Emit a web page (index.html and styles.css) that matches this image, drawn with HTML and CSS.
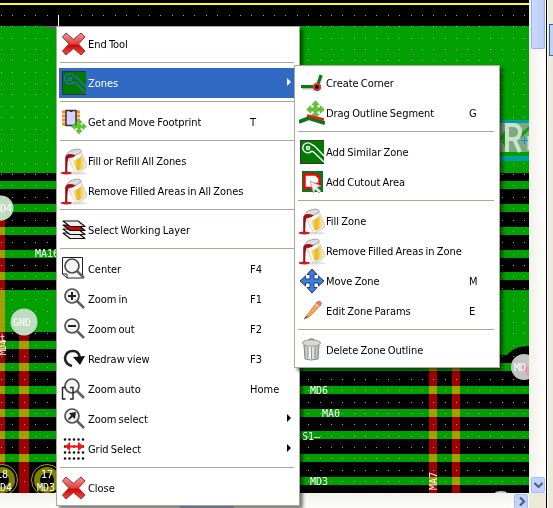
FILE: index.html
```
<!DOCTYPE html>
<html lang="en">
<head>
<meta charset="utf-8">
<title>Board editor</title>
<link rel="stylesheet" href="styles.css">
</head>
<body>
<svg class="board" width="529" height="493" viewBox="0 0 529 493">
  <rect width="529" height="493" fill="#000"/>
  <g fill="#00a000" shape-rendering="crispEdges">
    <rect y="26" width="529" height="147"/>
    <rect y="181" width="529" height="8"/><rect y="204" width="529" height="8"/><rect y="227" width="529" height="8"/>
    <rect y="250" width="529" height="8"/><rect y="272" width="529" height="8"/><rect y="290" width="529" height="42"/>
    <rect x="300" y="330" width="229" height="25"/>
    <rect y="341" width="290" height="8"/><rect y="363" width="529" height="8"/><rect y="386" width="529" height="8"/>
    <rect y="409" width="529" height="8"/><rect y="431" width="529" height="8"/><rect y="454" width="529" height="8"/>
    <rect x="290" y="477" width="239" height="8"/>
  </g>
  <path d="M499 363V355H507Q514 346 529 346V363Z" fill="#000"/>
  <rect y="3" width="529" height="2" fill="#ff0"/>
  <g class="tracks" fill="#a00000" shape-rendering="crispEdges">
    <rect y="208" width="5" height="285"/><rect x="19" y="326" width="10" height="167"/>
    <rect x="429" y="360" width="8" height="133"/><rect x="452" y="360" width="8" height="133"/>
  </g>
  <g fill="#00a0a0" shape-rendering="crispEdges"><rect x="490" y="120" width="39" height="41"/></g>
  <rect x="490" y="123" width="39" height="33" fill="#00a000"/>
  <rect x="490" y="123" width="39" height="29" fill="#80a880"/>
  <path d="M500 138l6-9v20zM519 135l10-9v4l-8 8z" fill="#10a010"/>
  <g id="dots" fill="#a0a0a0" shape-rendering="crispEdges"></g>
  <path d="M507 152V125H514Q520 126 520 132T514 139H508M514 139L520 152" fill="none" stroke="#c8e4c8" stroke-width="4"/>
  <path d="M529 136V150" stroke="#c8e4c8" stroke-width="3"/>
  <path d="M521 140.500H528M524.500 137V144" stroke="#0090ff"/>
  <circle cx="1" cy="208" r="12.500" fill="#c0dcc0"/>
  <circle cx="24" cy="322" r="13.500" fill="#c0dcc0"/>
  <circle cx="524" cy="367" r="13" fill="#c4c4c4"/><path d="M521 366L529 378V366Z" fill="#e0a0a0"/>
  <ellipse cx="501" cy="493" rx="6" ry="2" fill="#c4c4c4"/>
  <g fill="#000" stroke="#a0a000"><circle cx="2" cy="480" r="15.500"/><circle cx="47" cy="480" r="15.500"/></g>
  <g fill="#000" stroke="#808000" stroke-width="6"><circle cx="2" cy="480" r="10"/><circle cx="47" cy="480" r="10"/></g>
  <g class="net">
    <text x="0" y="212">D4</text><text x="13" y="326">GND</text>
    <text x="35" y="257">MA16</text><text x="310" y="394">MD6</text><text x="322" y="417">MA0</text>
    <text x="302" y="440">S1–</text><text x="310" y="485">MD3</text><text x="514" y="371">MD</text>
    <text x="-4" y="478">18</text><text x="0" y="491">D4</text><text x="41" y="478">17</text><text x="37" y="491">MD3</text>
    <text class="small" transform="translate(6 355) rotate(-90)">MD4</text><text transform="translate(437 490) rotate(-90)">MA7</text>
    <text class="small" x="0" y="341">t</text>
  </g>
  <path d="M58.500 15V26" stroke="#fff"/><path d="M46 26.500H57" stroke="#f0f"/>
</svg>

<div class="vscroll"><div class="thumb"></div><div class="btn"><svg width="13" height="14"><path d="M2.500 5L6.500 9L10.500 5" /></svg></div></div>
<div class="hscroll"><div class="bar"></div><div class="btn"><svg width="13" height="13"><path d="M5 2.500L9 6.500L5 10.500"/></svg></div></div>
<div class="side"><i></i></div>

<svg class="defs" width="0" height="0">
  <linearGradient id="red" x2="0" y2="1"><stop stop-color="#ee9a9a"/><stop offset=".5" stop-color="#df4040"/><stop offset=".55" stop-color="#cc0808"/><stop offset="1" stop-color="#f04b42"/></linearGradient>
  <linearGradient id="metal"><stop stop-color="#aaa"/><stop offset=".4" stop-color="#fff"/><stop offset="1" stop-color="#aaa"/></linearGradient>
  <linearGradient id="can"><stop stop-color="#ddd"/><stop offset=".4" stop-color="#fff"/><stop offset="1" stop-color="#ddd"/></linearGradient>
  <linearGradient id="gold"><stop stop-color="#fff0b0"/><stop offset=".45" stop-color="#e8b420"/><stop offset="1" stop-color="#fff4b8"/></linearGradient>
  <symbol id="i-x" viewBox="0 0 26 26"><path d="M5 2L12.500 8.500L20 2L24 6L17.500 13L24 20L20 24L12.500 17.500L5 24L1.500 20L8 13L1.500 6Z" fill="url(#red)" stroke="#a82a28" stroke-linejoin="round"/></symbol>
  <symbol id="i-zone" viewBox="0 0 26 26"><rect x="1" y="1" width="24" height="24" fill="#333"/><rect x="2" y="2" width="23" height="22" fill="#007a00"/><g fill="none" stroke="currentColor" stroke-width="1.400"><path d="M12.500 5.500Q15 6.500 16.500 8L25 17M12 12.500H14L25 23"/><path d="M12.700 12A5 5 0 1 1 12.500 5.500"/></g><circle cx="9" cy="9" r="2.300" fill="currentColor"/><circle cx="9" cy="9" r=".8" fill="#007a00"/></symbol>
  <symbol id="i-arrows" viewBox="0 0 26 26"><path d="M13 1L18 6.500H15V11H19.500V8L25 13L19.500 18V15H15V19.500H18L13 25L8 19.500H11V15H6.500V18L1 13L6.500 8V11H11V6.500H8Z" stroke-linejoin="round"/></symbol>
  <symbol id="i-foot" viewBox="0 0 26 26"><path d="M1 3H6M1 7H6M1 11H6M1 15H6M15 3H19M15 7H19M15 11H19" stroke="#f09030" stroke-width="3"/><rect x="5" y="1.500" width="10" height="15" fill="#d4d4ff" stroke="#333" stroke-width="1.500"/><path d="M8 1.500Q10 5 12.500 1.500Z" fill="#333"/><svg x="10" y="9" width="16" height="17" fill="#62c832" stroke="#48a820"><use href="#i-arrows"/></svg></symbol>
  <symbol id="i-fill" viewBox="0 0 26 26"><ellipse cx="14" cy="24.300" rx="12" ry="1.300" fill="#ddd"/><path d="M7 6L20 3L26 17Q22 23 15 24Q10 16 7 6Z" fill="url(#can)" stroke="#bbb" stroke-width=".6"/><path d="M12 12Q18 11 21 7L24.500 17Q21 21 16 22Z" fill="url(#gold)"/><ellipse cx="13.500" cy="4.500" rx="7" ry="2.800" transform="rotate(-17 13.500 4.500)" fill="#ddd" stroke="#999" stroke-width=".8"/><path d="M5 9Q6 5 12 6L15 7Q13 10 8.500 9.500Q7 11 7 23H5Z" fill="#9c1018"/><ellipse cx="6" cy="24" rx="5.500" ry="1.400" fill="#cc1828"/></symbol>
  <symbol id="i-layers" viewBox="0 0 26 26"><g fill="#eee" stroke="#111" stroke-width="1.200" stroke-linejoin="round"><path d="M2 16H17L24 21.500H9Z"/><path d="M2 12H17L24 17.500H9Z"/><path d="M2 8H17L24 13.500H9Z" fill="#d80000"/><path d="M2 4H17L24 9.500H9Z"/></g></symbol>
  <symbol id="i-mag" viewBox="0 0 26 26"><circle cx="11" cy="10" r="7" fill="#f4f4f4" stroke="#505050" stroke-width="1.700"/><path d="M16 15L23 22" stroke="#606060" stroke-width="2.500"/></symbol>
  <symbol id="i-center" viewBox="0 0 26 26"><path d="M1.500 1.500H21.500V22H6L1.500 18ZM1.500 18H6V22" fill="#fff" stroke="#222"/><use href="#i-mag"/></symbol>
  <symbol id="i-in" viewBox="0 0 26 26"><use href="#i-mag"/><path d="M7 10H15M11 6V14" stroke="#222" stroke-width="2"/></symbol>
  <symbol id="i-out" viewBox="0 0 26 26"><use href="#i-mag"/><path d="M7 10H15" stroke="#222" stroke-width="2"/></symbol>
  <symbol id="i-redraw" viewBox="0 0 26 26"><path d="M11 20Q4 18 4 12Q5 5 12 5Q18 5 19 12" fill="none" stroke="#222" stroke-width="2.600"/><path d="M12 11L24 10L19 19Z" fill="#111"/></symbol>
  <symbol id="i-auto" viewBox="0 0 26 26"><use href="#i-mag"/><path d="M4.500 11.500H1.500V23H4.500M9 11.500H12V23H9" fill="none" stroke="#222" stroke-width="1.400"/></symbol>
  <symbol id="i-select" viewBox="0 0 26 26"><use href="#i-mag"/><path d="M8 7L15 6L14 13L11.500 11L8 14L7 13L10 9.500Z" fill="#222"/></symbol>
  <symbol id="i-grid" viewBox="0 0 26 26"><path d="M4 3.500H24M4 10.500H24M4 16.500H24M4 22.500H24" stroke="#111" stroke-width="2.600" stroke-linecap="round" stroke-dasharray="0 4.500"/><path d="M4 10.500L9 6V9.500H17V6L23 10.500L17 15V11.500H9V15Z" fill="#ff1010"/></symbol>
  <symbol id="i-corner" viewBox="0 0 26 26"><path d="M3 18H18L23 6" fill="none" stroke="#bbb" stroke-width="3"/><path d="M2 16.500H18L22 5" fill="none" stroke="#008010" stroke-width="3"/><circle cx="18" cy="17" r="3.200" fill="#111" stroke="#d83838" stroke-width="2.200"/></symbol>
  <symbol id="i-drag" viewBox="0 0 26 26"><svg x="7" y="0" width="19" height="19" fill="#68c838" stroke="#50a828"><use href="#i-arrows"/></svg><path d="M0 22L10 18L26 23" fill="none" stroke="#087818" stroke-width="4"/><path d="M8 15.500L25 19.500" stroke="#f01818" stroke-width="2.500"/></symbol>
  <symbol id="i-cut" viewBox="0 0 26 26"><rect x="3" y="2" width="21" height="21" fill="#007a20"/><path d="M5.500 5.500H17L20.500 9V15H14V19H5.500Z" fill="#fff" stroke="#f00" stroke-width="2.500"/><path d="M11 12L22 17L18 18.500L22 22L20 24L16.500 20.500L14.500 24Z" fill="#eee" stroke="#999" stroke-width=".8"/></symbol>
  <symbol id="i-move" viewBox="0 0 26 26"><g fill="#3d7de0" stroke="#223c70"><use href="#i-arrows"/></g></symbol>
  <symbol id="i-pen" viewBox="0 0 26 26"><path d="M6 20L18 4L22 7L10 19L5 21Z" fill="#f8a850" stroke="#c87828" stroke-width=".8"/><path d="M17 5L19 3Q22 2 23 6L21 8Z" fill="#e87070"/><path d="M16 6L20 9" stroke="#ccc" stroke-width="1.500"/><path d="M5 21L7 18L9 19Z" fill="#555"/></symbol>
  <symbol id="i-trash" viewBox="0 0 26 26"><path d="M5 8H20L19 22Q12 24 6 22Z" fill="url(#metal)" stroke="#888"/><path d="M9 10V21M12.500 10V22M16 10V21" stroke="#999" stroke-width="1.200"/><ellipse cx="12.500" cy="6" rx="9" ry="3.200" fill="#d8d8d4" stroke="#999"/><path d="M10 3Q12.500 1 15 3" fill="none" stroke="#888" stroke-width="1.500"/></symbol>
</svg>

<nav class="menu main">
  <div class="item"><svg><use href="#i-x"/></svg><span>End Tool</span></div>
  <hr>
  <div class="item active"><svg><use href="#i-zone"/></svg><span>Zones</span><b class="arrow"></b></div>
  <hr>
  <div class="item"><svg><use href="#i-foot"/></svg><span>Get and Move Footprint</span><kbd>T</kbd></div>
  <hr>
  <div class="item"><svg class="wide"><use href="#i-fill"/></svg><span>Fill or Refill All Zones</span></div>
  <div class="item"><svg class="wide"><use href="#i-fill"/></svg><span>Remove Filled Areas in All Zones</span></div>
  <hr>
  <div class="item"><svg><use href="#i-layers"/></svg><span>Select Working Layer</span></div>
  <hr>
  <div class="item"><svg><use href="#i-center"/></svg><span>Center</span><kbd>F4</kbd></div>
  <div class="item"><svg><use href="#i-in"/></svg><span>Zoom in</span><kbd>F1</kbd></div>
  <div class="item"><svg><use href="#i-out"/></svg><span>Zoom out</span><kbd>F2</kbd></div>
  <div class="item"><svg><use href="#i-redraw"/></svg><span>Redraw view</span><kbd>F3</kbd></div>
  <div class="item"><svg><use href="#i-auto"/></svg><span>Zoom auto</span><kbd>Home</kbd></div>
  <div class="item"><svg><use href="#i-select"/></svg><span>Zoom select</span><b class="arrow"></b></div>
  <div class="item"><svg><use href="#i-grid"/></svg><span>Grid Select</span><b class="arrow"></b></div>
  <hr>
  <div class="item"><svg><use href="#i-x"/></svg><span>Close</span></div>
</nav>

<nav class="menu sub">
  <div class="item"><svg><use href="#i-corner"/></svg><span>Create Corner</span></div>
  <div class="item"><svg><use href="#i-drag"/></svg><span>Drag Outline Segment</span><kbd>G</kbd></div>
  <hr>
  <div class="item"><svg><use href="#i-zone"/></svg><span>Add Similar Zone</span></div>
  <div class="item"><svg><use href="#i-cut"/></svg><span>Add Cutout Area</span></div>
  <hr>
  <div class="item"><svg class="wide"><use href="#i-fill"/></svg><span>Fill Zone</span></div>
  <div class="item"><svg class="wide"><use href="#i-fill"/></svg><span>Remove Filled Areas in Zone</span></div>
  <div class="item"><svg><use href="#i-move"/></svg><span>Move Zone</span><kbd>M</kbd></div>
  <div class="item"><svg><use href="#i-pen"/></svg><span>Edit Zone Params</span><kbd>E</kbd></div>
  <hr>
  <div class="item"><svg><use href="#i-trash"/></svg><span>Delete Zone Outline</span></div>
</nav>
<script src="grid.js"></script>
</body>
</html>
```
FILE: styles.css
```
body { margin: 0; width: 553px; height: 508px; overflow: hidden; position: relative; background: #ece9d8; font: 11px/30px "DejaVu Sans Condensed", "DejaVu Sans", sans-serif; font-stretch: condensed; color: #000; display: grid; grid-template: 493px 15px / 529px 17px 7px; }
.board { display: block; }
.tracks { mix-blend-mode: screen; }
.net { fill: #fff; font: 10px "DejaVu Sans Mono", monospace; }
.small { font-size: 8.5px; }
.defs { position: absolute; }
.vscroll { display: flex; flex-direction: column; justify-content: space-between; background: linear-gradient(90deg, #f3f1ec, #fefefb); padding: 0 1px 0 2px; }
.vscroll .thumb { height: 49px; background: linear-gradient(90deg, #cad9fc, #b9cbf8); border: 1px solid #98b0e8; border-top: 0; border-radius: 0 0 2px 2px; box-sizing: border-box; }
.btn { width: 14px; height: 16px; background: #c3d3fd; border: 1px solid #a9bdf0; border-radius: 2px; box-sizing: border-box; display: flex; overflow: hidden; }
.btn path { fill: none; stroke: #4d6185; stroke-width: 2.2; }
.hscroll { grid-row: 2; grid-column: 1; display: flex; justify-content: space-between; background: linear-gradient(#f3f1ec, #fefefb); padding: 1px 1px 0 180px; }
.bar { width: 54px; background: #b9cbf8; }
.side { grid-column: 3; grid-row: 1 / 3; border-left: 1px solid #000; background: #ece9d8; box-shadow: inset 1px 0 #fff; padding: 24px 0 0 2px; }
.side i { display: block; height: 30px; border: 1px solid #316ac5; border-right: 0; background: #c1d2ee; }
.menu { position: absolute; box-sizing: border-box; background: #fff; border: 1px solid #aca899; padding: 2px; box-shadow: 3px 3px 3px rgba(0, 0, 0, .5); }
.main { left: 56px; top: 26px; width: 244px; height: 480px; padding-right: 5px; }
.sub { left: 294px; top: 65px; width: 206px; height: 303px; padding-right: 5px; }
.item { display: flex; height: 30px; align-items: center; position: relative; white-space: nowrap; }
.item > svg { width: 26px; height: 26px; margin-left: 2px; flex: none; color: #fff; }
.item > svg.wide { width: 27px; height: 27px; margin-left: 1px; }
.item span { margin-left: 1px; padding-top: 2px; line-height: 28px; flex: 1; letter-spacing: -.05px; word-spacing: -.8px; }
.item kbd { font: inherit; line-height: 28px; padding-top: 2px; width: 44px; }
.sub kbd { width: 25px; }
.active { background: #316ac5; color: #fff; }
.item.active > svg { color: #316ac5; }
.arrow { border: 4px solid transparent; border-left-color: currentColor; border-right: 0; margin: 0 3px 2px 0; }
hr { width: auto; height: 1px; border: 0; background: #aca899; margin: 3px 0 5px 1px; }
```
FILE: grid.js
```
// Dot grid of the canvas
const g = document.getElementById('dots');
let s = '';
for (let y = 15.3; y < 493; y += 11.375)
  for (let x = 1.5; x < 529; x += 11.375)
    s += `<rect x="${Math.floor(x)}" y="${Math.floor(y)}" width="1" height="1"/>`;
g.innerHTML = s;
```
